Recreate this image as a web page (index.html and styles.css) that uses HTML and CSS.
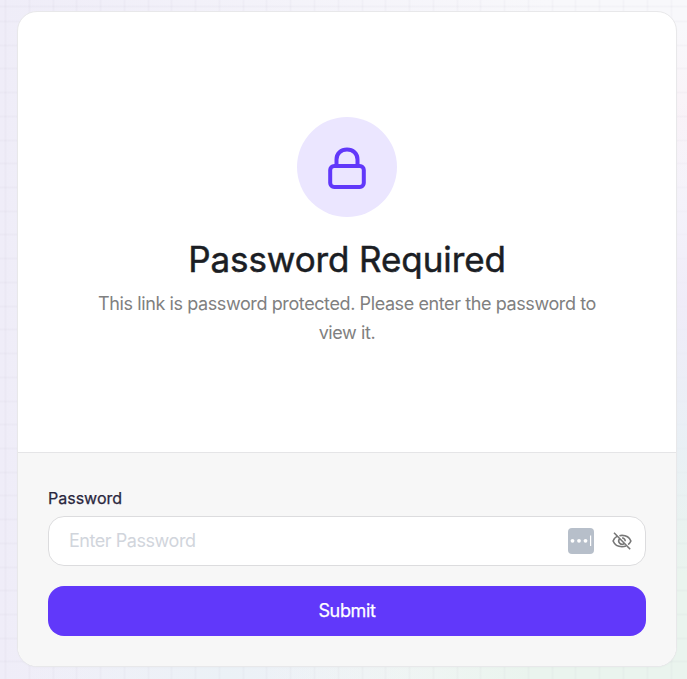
FILE: index.html
```html
<!DOCTYPE html>
<html lang="en">
<head>
<meta charset="utf-8">
<title>Password Required</title>
<link rel="stylesheet" href="styles.css">
</head>
<body>
<main class="card">
  <section class="intro">
    <div class="badge">
      <svg width="50" height="50" viewBox="0 0 50 50" fill="none" stroke="#6138fa" stroke-width="4">
        <rect x="8.2" y="24" width="33.6" height="21" rx="4"/>
        <path d="M14.500 24V17.500C14.500 11.500 19 7.500 25 7.500S35.500 11.500 35.500 17.500V24"/>
      </svg>
    </div>
    <h1>Password Required</h1>
    <p>This link is password protected. Please enter the password to view it.</p>
  </section>
  <form class="form">
    <label for="password">Password</label>
    <div class="field">
      <input id="password" type="password" placeholder="Enter Password">
      <svg class="manager" width="26" height="26" viewBox="0 0 26 26">
        <rect width="26" height="26" rx="4" fill="#b7bfca"/>
        <g fill="#fff"><circle cx="4.500" cy="12.800" r="1.900"/><circle cx="11" cy="12.800" r="1.900"/><circle cx="17.500" cy="12.800" r="1.900"/><rect x="22" y="7.500" width="1.200" height="10.500"/></g>
      </svg>
      <svg class="eye" width="20" height="20" viewBox="0 0 20 20" fill="none" stroke="#777" stroke-width="1.600">
        <path d="M5.300 5.100C3.300 6.200 1.900 7.900 1.100 10c1.500 3.700 4.900 5.700 8.900 5.700 1.400 0 2.700-.2 3.900-.7M7.400 4.700C8.200 4.500 9.100 4.400 10 4.400c4 0 7.400 2 8.900 5.600-.6 1.500-1.500 2.700-2.700 3.700"/>
        <path d="M7.200 8.200a3.400 3.400 0 0 0 4.900 4.500M10.200 6.900a3.200 3.200 0 0 1 3 3.400M2 1.800l16.200 16.400"/>
      </svg>
    </div>
    <button type="button">Submit</button>
  </form>
</main>
</body>
</html>
```
FILE: styles.css
```css
* {
  box-sizing: border-box;
}

body {
  position: relative;
  margin: 0;
  height: 679px;
  padding: 11px 10px 12px 17px;
  overflow: hidden;
  font-family: Inter, "Liberation Sans", sans-serif;
  background:
    repeating-linear-gradient(90deg, rgba(100, 90, 130, 0.03) 0 2px, transparent 2px 23.77px) 4.500px 0,
    repeating-linear-gradient(180deg, rgba(100, 90, 130, 0.03) 0 2px, transparent 2px 23.72px) 0 20.500px,
    radial-gradient(circle at 100% 100%, #eaf4ee 0, #eaf4ee 160px, rgba(234, 244, 238, 0) 420px),
    radial-gradient(circle at 33% 100%, #ebf1f6 0, rgba(235, 241, 246, 0) 200px),
    radial-gradient(circle at 100% 17%, #f9f2f7 0, rgba(249, 242, 247, 0) 90px),
    linear-gradient(90deg, #efedf8, #f8f8fb 80%);
}

body::before {
  content: "";
  position: absolute;
  inset: 0 0 0 auto;
  width: 12px;
  background: linear-gradient(180deg, rgba(241, 237, 249, 0) 15%, rgba(238, 233, 248, 0.8) 44%, rgba(231, 237, 246, 0.7) 65%, rgba(234, 244, 238, 0) 85%);
}

.card {
  position: relative;
  width: 660px;
  height: 656px;
  border: 1px solid #e8e8ea;
  border-radius: 20px;
  overflow: hidden;
  background: #fff;
  box-shadow: 0 1px 2px rgba(0, 0, 0, 0.02);
}

.intro {
  height: 441px;
  padding: 105px 70px 0;
  border-bottom: 1px solid #e5e5e7;
  text-align: center;
}

.badge {
  display: grid;
  place-items: center;
  width: 100px;
  height: 100px;
  margin: 0 auto;
  border-radius: 50%;
  background: #ebe6ff;
}

h1 {
  margin: 21px 0 8px;
  font-size: 35px;
  font-weight: 400;
  line-height: 43px;
  letter-spacing: -0.1px;
  color: #1b1e24;
  -webkit-text-stroke: 0.5px #1b1e24;
}

p {
  margin: 0;
  font-size: 18px;
  line-height: 29px;
  letter-spacing: -0.4px;
  color: #808080;
}

.form {
  height: 213px;
  padding: 33px 30px 0;
  background: #f7f7f7;
}

label {
  display: block;
  height: 30px;
  font-size: 16px;
  font-weight: 400;
  line-height: 24px;
  color: #29263d;
  -webkit-text-stroke: 0.25px #29263d;
}

.field {
  display: flex;
  align-items: center;
  height: 50px;
  padding: 0 13px 0 20px;
  border: 1px solid #dcdcde;
  border-radius: 16px;
  background: #fff;
}

input {
  flex: 1;
  min-width: 0;
  padding: 0 0 2px;
  border: 0;
  outline: 0;
  background: transparent;
  font: 18px Inter, sans-serif;
  letter-spacing: -0.45px;
}

input::placeholder {
  color: #d1d5dc;
}

.eye {
  margin-left: 18px;
}

button {
  display: block;
  width: 100%;
  height: 50px;
  margin-top: 20px;
  padding: 0 0 2px;
  border: 0;
  border-radius: 16px;
  background: #6138fa;
  color: #fff;
  font: 400 18px Inter, sans-serif;
  letter-spacing: -0.35px;
  -webkit-text-stroke: 0.25px #fff;
}
```
